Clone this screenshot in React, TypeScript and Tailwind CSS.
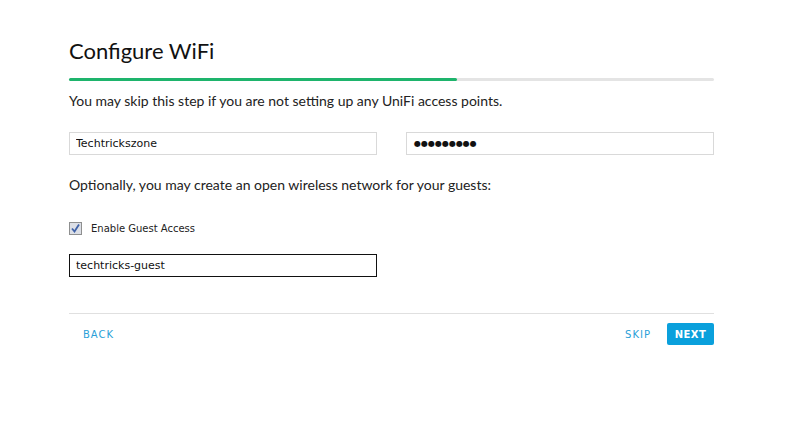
import React, { useState } from 'react';

const App: React.FC = () => {
  const [guest, setGuest] = useState(true);

  return (
    <div className="min-h-screen bg-white font-['Lato',sans-serif] text-[#222]">
      <div className="w-[645px] ml-[69px] pt-[37px]">
        {/* Title */}
        <h1 className="text-[22px] leading-[28px] text-[#111]">Configure WiFi</h1>

        {/* Progress */}
        <div className="mt-[13px] h-[3px] w-full rounded-full bg-[#e4e4e4]">
          <div className="h-full w-[60.2%] rounded-full bg-[#1eb46c]"></div>
        </div>

        <p className="mt-[10px] text-[14px] leading-[20px] text-[#222]">
          You may skip this step if you are not setting up any UniFi access points.
        </p>

        {/* SSID / password */}
        <div className="mt-[21px] flex justify-between">
          <input
            defaultValue="Techtrickszone"
            className="h-[23px] w-[308px] border border-[#d9d9d9] px-[6px] font-['DejaVu_Sans',sans-serif] text-[11px] text-[#111] outline-none"
          />
          <div className="h-[23px] w-[308px] flex items-center border border-[#d9d9d9] px-[7px] font-['DejaVu_Sans',sans-serif] text-[8px] text-[#111]">
            ●●●●●●●●●
          </div>
        </div>

        <p className="mt-[20px] text-[14px] leading-[20px] text-[#222]">
          Optionally, you may create an open wireless network for your guests:
        </p>

        {/* Guest checkbox */}
        <label className="mt-[26px] flex items-center gap-[9px] font-['DejaVu_Sans',sans-serif] text-[10px] text-[#222] cursor-pointer">
          <span
            onClick={() => setGuest(!guest)}
            className="flex h-[13px] w-[13px] items-center justify-center border border-[#8e8f8f] bg-[#dcdfe6]"
          >
            {guest && (
              <svg width="9" height="9" viewBox="0 0 9 9">
                <path d="M1 4.5 L3.5 7.5 L8 0.5" fill="none" stroke="#3f62a8" strokeWidth="1.8" />
              </svg>
            )}
          </span>
          Enable Guest Access
        </label>

        <div className="mt-[15px] w-[308px]">
          <input
            defaultValue="techtricks-guest"
            className="h-[23px] w-full border border-[#111] px-[6px] font-['DejaVu_Sans',sans-serif] text-[11px] text-[#111] outline-none"
          />
        </div>

        {/* Footer */}
        <div className="mt-[36px] border-t border-[#e0e0e0] pt-[9px] flex items-center justify-between">
          <button className="ml-[14px] text-[10px] tracking-[1px] text-[#2a9fd8] font-['DejaVu_Sans',sans-serif]">
            BACK
          </button>
          <div className="flex items-center gap-[16px]">
            <button className="text-[10px] tracking-[1px] text-[#2a9fd8] font-['DejaVu_Sans',sans-serif]">
              SKIP
            </button>
            <button className="h-[22px] w-[47px] rounded-[2px] bg-[#0aa0dc] text-[10px] font-bold tracking-[0.5px] text-white font-['DejaVu_Sans',sans-serif]">
              NEXT
            </button>
          </div>
        </div>
      </div>
    </div>
  );
};

export default App;
